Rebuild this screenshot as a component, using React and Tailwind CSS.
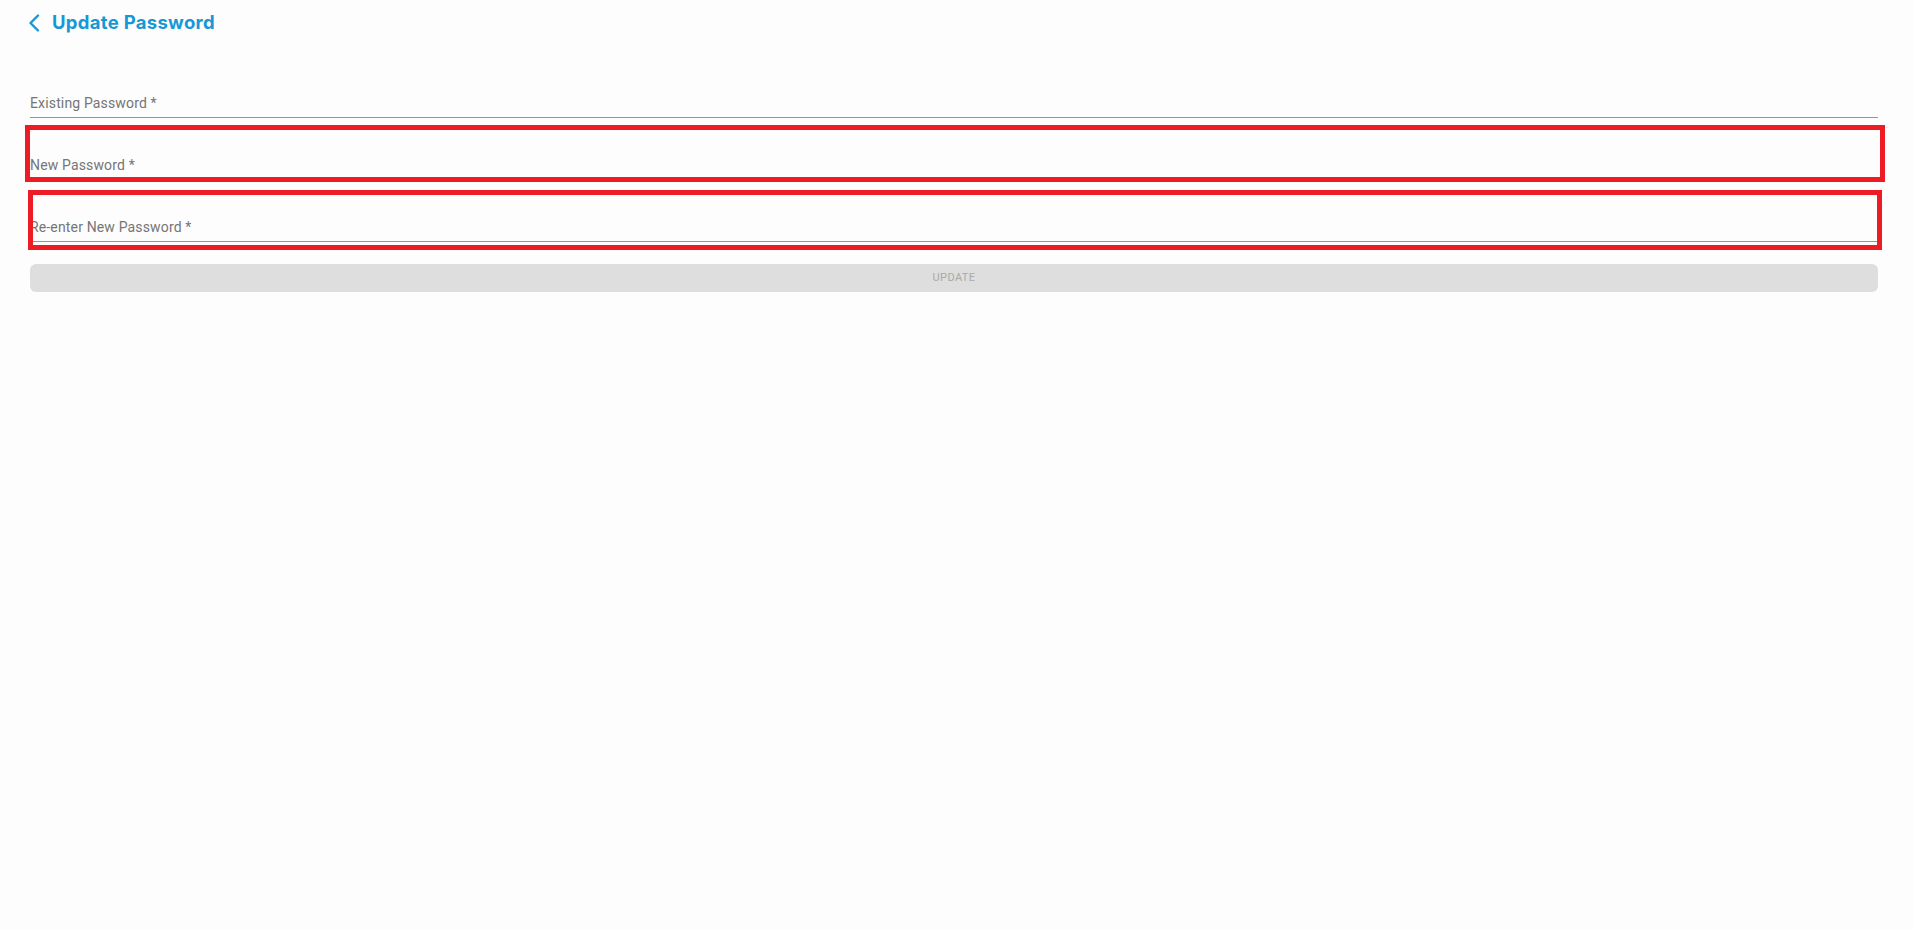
const Field = ({ label, mark }) => {
  return (
    <div className="relative">
      <div className="h-[62px] flex items-end pb-[6px] border-b border-[#949494]">
        <label className="text-[14px] leading-4 tracking-[0.15px] text-[#757575]">{label}</label>
      </div>
      {mark === 'a' && (
        <div className="absolute top-[7px] -left-[5px] -right-[7px] -bottom-[2px] border-[5px] border-[#ed1c24] pointer-events-none"></div>
      )}
      {mark === 'b' && (
        <div className="absolute top-[10px] -left-[2px] -right-[4px] -bottom-[8px] border-[5px] border-[#ed1c24] pointer-events-none"></div>
      )}
    </div>
  );
};

const App = () => {
  return (
    <div className="min-h-screen w-full bg-[#fdfdfd] pl-[30px] pr-[36px]" style={{ fontFamily: 'Roboto, "Liberation Sans", sans-serif' }}>
      <div className="h-[46px] flex items-center">
        <svg width="12" height="18" viewBox="0 0 12 18" fill="none" className="-ml-[2px]">
          <polyline points="10,1.5 2.5,9 10,16.5" stroke="#1798d5" strokeWidth="2.4" strokeLinecap="round" strokeLinejoin="round" />
        </svg>
        <h1 className="ml-[12px] text-[18.5px] font-bold text-[#1798d5] tracking-[0.3px]" style={{ fontFamily: 'Inter, "Noto Sans", sans-serif' }}>
          Update Password
        </h1>
      </div>
      <form className="mt-[10px]">
        <Field label="Existing Password *" />
        <Field label="New Password *" mark="a" />
        <Field label="Re-enter New Password *" mark="b" />
        <button
          type="button"
          disabled
          className="mt-[22px] w-full h-[28px] rounded-[6px] bg-[#dedede] text-[11px] tracking-[0.4px] text-[#a9a9a9] uppercase"
        >
          Update
        </button>
      </form>
    </div>
  );
};

export default App;
